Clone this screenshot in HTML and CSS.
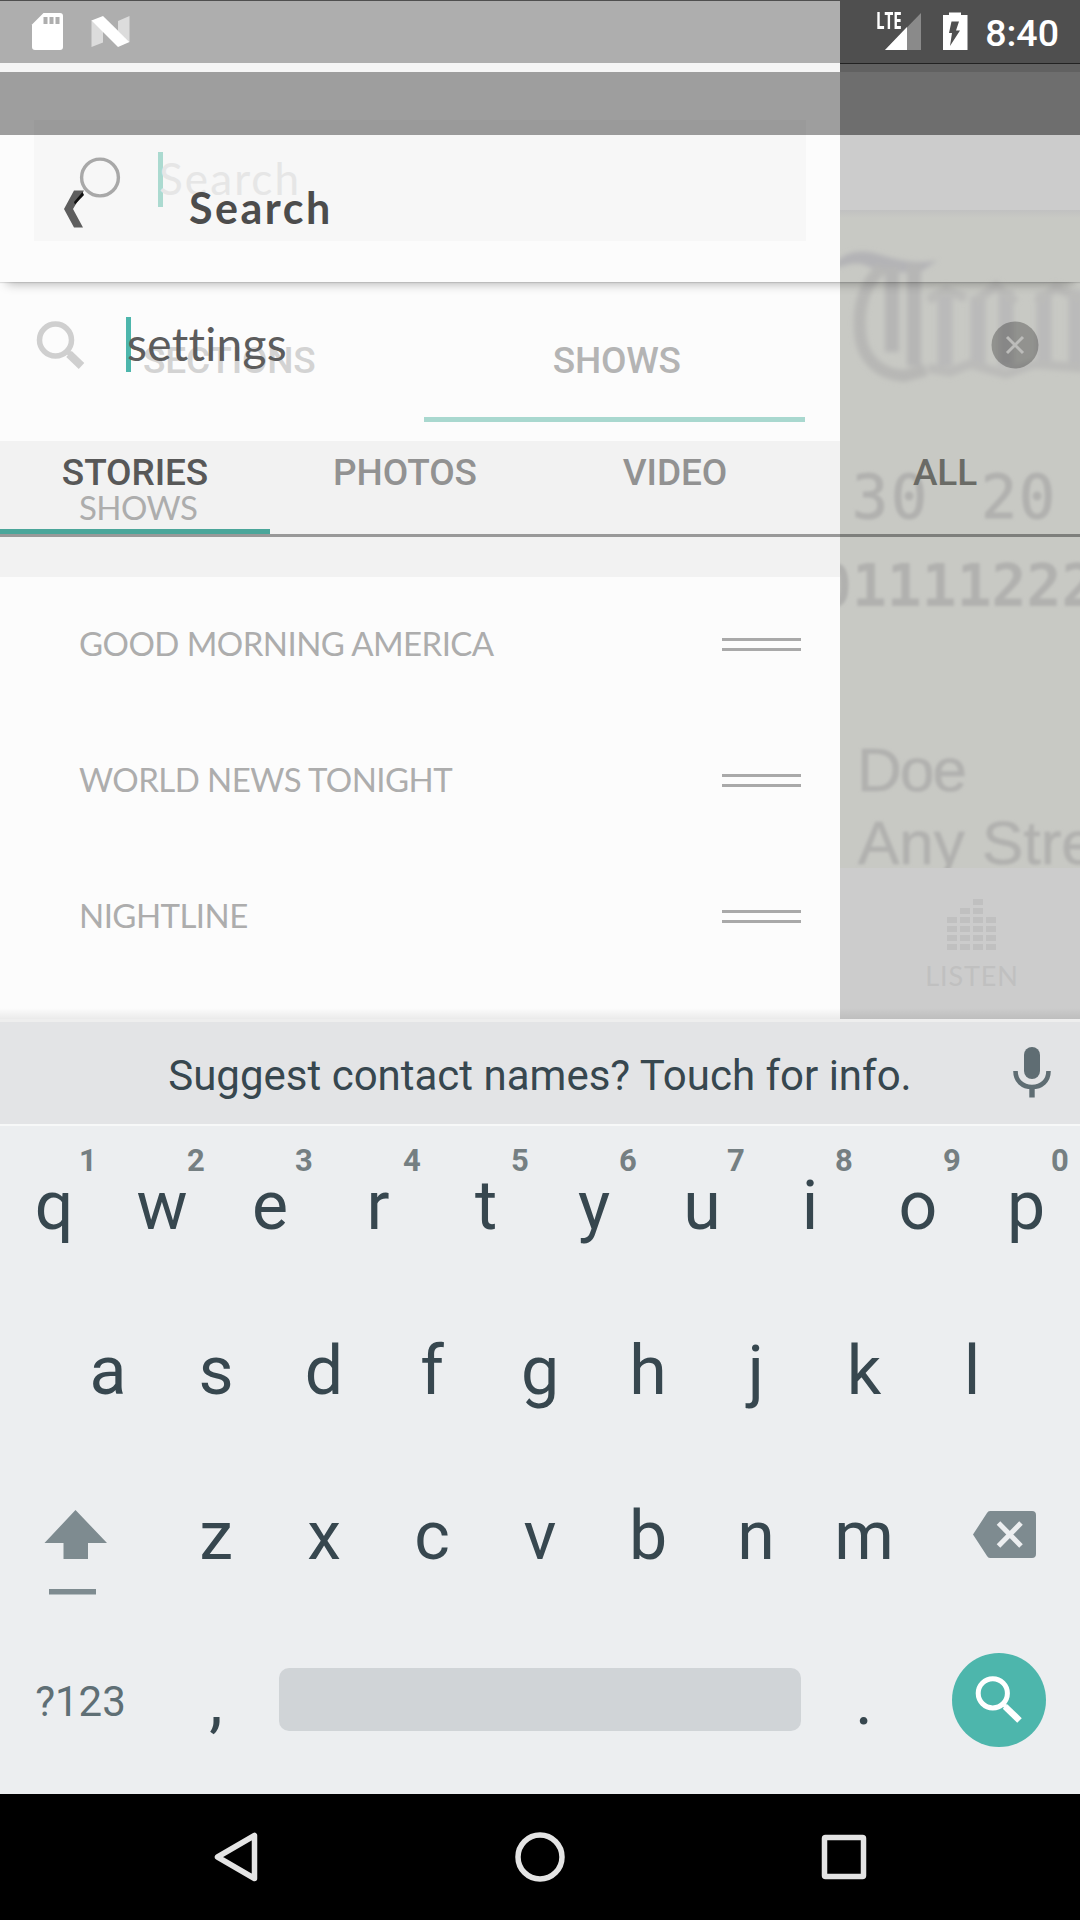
FILE: index.html
```html
<!DOCTYPE html>
<html lang="en">
<head>
<meta charset="utf-8">
<title>Search</title>
<link rel="stylesheet" href="styles.css">
</head>
<body>
<div class="phone">
  <main class="stage">
    <div class="backdrop">
      <section class="drawer">
        <div class="drawer-search">
          <svg class="drawer-lens" width="60" height="70" viewBox="0 0 60 70"><circle cx="36" cy="33.500" r="18.400" fill="none" stroke="#a8a8a8" stroke-width="3.400"/></svg>
          <span class="caret caret-soft"></span>
          <span class="drawer-hint">Search</span>
        </div>
        <div class="drawer-tabs">
          <span class="drawer-tab">SECTIONS</span>
          <span class="drawer-tab drawer-tab-on">SHOWS</span>
        </div>
        <div class="drawer-heading"><span>SHOWS</span></div>
        <div class="show"><span>GOOD MORNING AMERICA</span><i class="grip"></i></div>
        <div class="show"><span>WORLD NEWS TONIGHT</span><i class="grip"></i></div>
        <div class="show"><span>NIGHTLINE</span><i class="grip"></i></div>
      </section>
      <section class="article">
        <svg class="photo" width="240" height="658" viewBox="840 210 240 658">
          <defs>
            <filter id="soft"><feGaussianBlur stdDeviation="1.6"/></filter>
            <filter id="softer"><feGaussianBlur stdDeviation="2.6"/></filter>
            <linearGradient id="edge" x1="0" y1="0" x2="0" y2="1"><stop offset="0" stop-color="#c1c1c1"/><stop offset="1" stop-color="#c8c9c4"/></linearGradient>
          </defs>
          <rect x="840" y="210" width="240" height="658" fill="#c8c9c4"/>
          <rect x="840" y="210" width="240" height="8" fill="url(#edge)"/>
          <g filter="url(#softer)">
            <path d="M836 262C850 248 868 250 884 256C904 262 922 264 938 260L922 271C902 274 880 272 862 264C852 262 844 266 836 268Z" fill="#b3b3b6"/>
            <path d="M882 268C864 284 858 306 860 332C862 358 878 374 904 376L926 370" fill="none" stroke="#b7b7b5" stroke-width="12"/>
            <path d="M892 266V352M914 264V366" fill="none" stroke="#b6b6b5" stroke-width="14"/>
            <path d="M945 296V366M978 296V366M1006 290V366M1044 292V366M1076 290V366" fill="none" stroke="#bababa" stroke-width="15"/>
            <path d="M928 300L946 290L966 298M974 302L996 286L1016 302M1036 302L1056 288L1084 300M928 368L950 372L970 364L1006 374L1034 364L1084 368" fill="none" stroke="#bbbbb9" stroke-width="9"/>
          </g>
          <g filter="url(#soft)" fill="#b1b1af">
            <text class="mono" x="852" y="518" textLength="75">30</text>
            <text class="mono" x="981" y="518" textLength="74">20</text>
            <text class="mono mono-bold" x="817" y="606">01111222</text>
            <text class="plain" x="857" y="791" textLength="110">Doe</text>
            <text class="plain" x="858" y="864">Any Street</text>
          </g>
        </svg>
        <div class="listen">
          <svg width="52" height="52" viewBox="0 0 52 52" fill="#c0c0c0"><path d="M1 18h10v6H1zM1 27h10v6H1zM1 36h10v6H1zM1 45h10v6H1zM14 9h10v6H14zM14 18h10v6H14zM14 27h10v6H14zM14 36h10v6H14zM14 45h10v6H14zM27 0h10v6H27zM27 9h10v6H27zM27 18h10v6H27zM27 27h10v6H27zM27 36h10v6H27zM27 45h10v6H27zM40 18h10v6H40zM40 27h10v6H40zM40 36h10v6H40zM40 45h10v6H40z"/></svg>
          <span class="listen-label">LISTEN</span>
        </div>
      </section>
    </div>

    <div class="search-screen">
      <header class="status">
        <svg width="140" height="63" viewBox="0 0 140 63">
          <path d="M43.500 13H60q3 0 3 3v31q0 3-3 3H35q-3 0-3-3V24.500z" fill="#fff"/>
          <path d="M43.500 17h4v7h-4zM49.500 17h4v7h-4zM55.500 17h4v7h-4z" fill="#aeaeae"/>
          <path d="M91.500 20L103 31v11.500L91.500 47zM129.500 16v26L118 31V21z" fill="#dcdcdc"/>
          <path d="M91.500 20.500L103 16L129.500 42L118 47z" fill="#fff"/>
        </svg>
        <div class="status-right">
          <span class="lte">LTE</span>
          <svg width="110" height="63" viewBox="869 0 110 63">
            <path d="M885 50L921 13V50z" fill="#8a8a8a"/>
            <path d="M885 50L907 27V50z" fill="#fff"/>
            <path d="M949 12.500h12V15h6.500v35h-24.500V15H949z" fill="#fff"/>
            <path d="M951.500 21.500h7.500l-3 9h4L950 46l2-13h-3z" fill="#4f4f4f"/>
          </svg>
          <span class="clock">8:40</span>
        </div>
      </header>
      <div class="toolbar">
        <svg width="30" height="50" viewBox="60 184 30 50"><path d="M74 190.500H84L73 209L83 227.500H74L64 209z" fill="#5e5e5e"/><path d="M82.500 192L74 202L75 204.500L84 195z" fill="#111"/></svg>
        <h1 class="title">Search</h1>
      </div>
      <div class="query">
        <svg width="52" height="52" viewBox="35 319 52 52" fill="none" stroke="#cfcfcf"><circle cx="55.500" cy="340" r="16" stroke-width="5.500"/><path d="M67 351l4 4" stroke-width="5"/><path d="M69 354L81.500 366" stroke-width="8" /></svg>
        <span class="caret"></span>
        <span class="query-text">settings</span>
        <svg class="clear" width="48" height="48" viewBox="0 0 48 48"><circle cx="24" cy="24" r="23.500" fill="rgba(0,0,0,.27)"/><path d="M16 16l16 16M32 16l-16 16" stroke="#bcbcba" stroke-width="3"/></svg>
      </div>
      <nav class="tabs">
        <span class="tab tab-on">STORIES</span>
        <span class="tab">PHOTOS</span>
        <span class="tab">VIDEO</span>
        <span class="tab tab-all">ALL</span>
      </nav>
      <div class="fade"></div>
    </div>
  </main>

  <section class="keyboard">
    <div class="suggest">
      <span class="suggest-text">Suggest contact names? Touch for info.</span>
      <svg class="mic" width="40" height="54" viewBox="1012 1046 40 54"><rect x="1024" y="1047" width="16" height="32" rx="8" fill="#5f6d73"/><path d="M1015.500 1071c0 10 7 16 16.500 16s16.500-6 16.500-16" fill="none" stroke="#5f6d73" stroke-width="4.600"/><path d="M1029.300 1087h5.400v10.500h-5.400z" fill="#5f6d73"/></svg>
    </div>
    <div class="row row-top">
      <span class="key">q<sup>1</sup></span><span class="key">w<sup>2</sup></span><span class="key">e<sup>3</sup></span><span class="key">r<sup>4</sup></span><span class="key">t<sup>5</sup></span><span class="key">y<sup>6</sup></span><span class="key">u<sup>7</sup></span><span class="key">i<sup>8</sup></span><span class="key">o<sup>9</sup></span><span class="key">p<sup>0</sup></span>
    </div>
    <div class="row">
      <span class="key">a</span><span class="key">s</span><span class="key">d</span><span class="key">f</span><span class="key">g</span><span class="key">h</span><span class="key">j</span><span class="key">k</span><span class="key">l</span>
    </div>
    <div class="row">
      <svg width="162" height="165" viewBox="0 1453 162 165" fill="#7e8b90"><path d="M75.500 1510L107 1543H88V1559H63.500V1543H44.500z"/><path d="M49 1589h47v5.500H49z"/></svg>
      <span class="key">z</span><span class="key">x</span><span class="key">c</span><span class="key">v</span><span class="key">b</span><span class="key">n</span><span class="key">m</span>
      <svg width="162" height="165" viewBox="918 1453 162 165"><path d="M990 1511H1032q4 0 4 4V1554q0 4-4 4H990q-2 0-3-2L973 1534.500L987 1513q1-2 3-2z" fill="#7e8b90"/><path d="M998.500 1523L1021 1546M1021 1523L998.500 1546" stroke="#eceef0" stroke-width="5"/></svg>
    </div>
    <div class="row">
      <span class="key key-mode">?123</span><span class="key">,</span><span class="space"></span><span class="key">.</span>
      <svg width="162" height="165" viewBox="918 1618 162 165"><circle cx="999" cy="1700" r="47" fill="#4db6ac"/><g fill="none" stroke="#fff"><circle cx="992.800" cy="1693.300" r="14.600" stroke-width="5"/><path d="M1003 1704.500l3 2" stroke-width="4"/><path d="M1005 1706.500L1019.500 1720.500" stroke-width="6.500"/></g></svg>
    </div>
  </section>

  <nav class="sysbar">
    <svg width="56" height="60" viewBox="0 0 56 60"><path d="M46.500 8.500V51.500L9.500 30z"/></svg>
    <svg width="60" height="60" viewBox="0 0 60 60"><circle cx="31" cy="30" r="22"/></svg>
    <svg width="60" height="60" viewBox="0 0 60 60"><rect x="10.500" y="10.500" width="39" height="39" rx="1"/></svg>
  </nav>
</div>
</body>
</html>
```
FILE: styles.css
```css
* { box-sizing: border-box; }
body { margin: 0; font-family: Roboto, sans-serif; font-variant-ligatures: none; }
svg { display: block; flex: none; }
.phone { width: 1080px; height: 1920px; display: flex; flex-direction: column; overflow: hidden; }

.stage { display: grid; height: 1019px; flex: none; overflow: hidden; }
.backdrop, .search-screen { grid-area: 1 / 1; height: 1019px; min-height: 0; }
.backdrop { display: grid; grid-template-columns: 840px 240px; }

.drawer {
  padding-top: 120px;
  background: linear-gradient(#4f4f4f 1px, #aeaeae 1px 63px, #f5f5f5 63px 72px, #9e9e9e 72px 135px, #fcfcfc 135px);
}
.drawer-search {
  display: flex; align-items: center; height: 121px; margin: 0 34px;
  padding: 0 0 3px 30px; background: rgba(0, 0, 0, .018);
}
.caret { width: 5px; height: 55px; background: #4db6ac; flex: none; }
.caret-soft { margin-left: 34px; background: #abdad0; }
.drawer-hint { margin-left: -4px; padding-bottom: 3px; font: 400 44px/50px Lato, sans-serif; letter-spacing: 2.1px; color: #e6e6e6; }
.drawer-tabs { display: flex; height: 119px; margin: 62px 35px 19px 41px; }
.drawer-tab { flex: 1; display: flex; align-items: center; justify-content: center; padding-right: 6px; border-bottom: 5px solid transparent; font-weight: 500; font-size: 37px; letter-spacing: -.2px; color: #d3d3d3; }
.drawer-tab-on { padding: 0 0 0 5px; border-color: #a9d8cf; color: #b4b4b4; }
.drawer-heading, .show { display: flex; align-items: center; height: 136px; padding: 0 39px 0 79px; font: 400 33px/40px Lato, sans-serif; letter-spacing: -.55px; color: #adadad; }
.drawer-heading { background: #f2f2f2; }
.drawer-heading span, .show span { padding-bottom: 5px; white-space: nowrap; }
.show { justify-content: space-between; }
.grip { width: 79px; height: 13px; margin-bottom: 2px; border: solid #a9a9a9; border-width: 3px 0; }

.article { display: flex; flex-direction: column; padding-top: 210px; background: linear-gradient(#4f4f4f 63px, #222 63px 64px, #616161 64px 72px, #6e6e6e 72px 135px, #ccc 135px); }
.mono { font: 400 60px "DejaVu Sans Mono", monospace; stroke: #b1b1af; stroke-width: 1px; }
.mono-bold { font-weight: 700; font-size: 58px; stroke: none; }
.plain { font: 400 62px "Liberation Sans", sans-serif; stroke: #b1b1af; stroke-width: .6px; }
.listen { display: flex; flex-direction: column; align-items: center; padding: 31px 0 0 24px; }
.listen-label { margin-top: 8px; font: 400 27px/34px Lato, sans-serif; letter-spacing: .9px; color: #c0c0c0; }

.search-screen { display: flex; flex-direction: column; }
.status { display: flex; justify-content: space-between; height: 63px; margin-bottom: 72px; }
.status-right { display: flex; position: relative; padding-right: 21px; }
.lte { position: absolute; left: 7px; top: 8px; font: 700 23px/24px "Open Sans", sans-serif; color: #fff; transform: scaleX(.66); transform-origin: left; }
.clock { margin-left: 6px; padding-top: 2px; font-weight: 500; font-size: 37.500px; line-height: 63px; color: #fff; }
.toolbar { display: flex; align-items: center; height: 147px; padding-left: 60px; box-shadow: 0 9px 10px -7px rgba(0, 0, 0, .28), 0 1px 1px rgba(0, 0, 0, .1); clip-path: inset(0 0 -20px 0); }
.title { margin: 0 0 0 99px; padding-bottom: 2px; font: 700 43px/50px Lato, sans-serif; letter-spacing: 2.5px; color: #4c4c4c; }
.query { display: flex; align-items: center; height: 125px; margin-bottom: 9px; padding: 0 41px 0 35px; }
.query .caret { margin-left: 39px; }
.query-text { margin-left: -4px; padding-bottom: 1px; font: 400 46px/56px Lato, sans-serif; letter-spacing: .3px; color: #5c5c5c; }
.clear { margin-left: auto; }
.tabs { display: flex; height: 121px; border-bottom: 3px solid rgba(0, 0, 0, .37); }
.tab { flex: 1; display: flex; align-items: center; justify-content: center; border-bottom: 5px solid transparent; font-weight: 500; font-size: 37px; letter-spacing: -.1px; color: #929292; }
.tab-on { border-color: #4ba69a; color: #585858; }
.tab-all { color: #6a6b66; }
.fade { margin-top: auto; height: 11px; background: linear-gradient(rgba(0, 0, 0, 0), rgba(0, 0, 0, .07)); }

.keyboard { height: 775px; flex: none; background: #eceef0; color: #37474f; }
.suggest { position: relative; display: flex; align-items: center; justify-content: center; height: 107px; border-top: 3px solid #eee; border-bottom: 2px solid #f7f8f8; background: #e3e4e6; }
.suggest-text { font-size: 42px; padding-top: 5px; }
.mic { position: absolute; right: 28px; top: 24px; }
.row { display: flex; justify-content: center; height: 165px; }
.row-top { height: 159px; margin-bottom: 3px; }
.key { position: relative; width: 108px; padding-top: 1px; display: flex; align-items: center; justify-content: center; font-size: 68px; }
.key sup { position: absolute; right: 0; top: 17px; width: 40px; text-align: center; font-weight: 700; font-size: 31px; line-height: 36px; color: #757f82; }
.key-mode { width: 162px; padding-right: 1px; font-size: 42px; color: #5f6f75; }
.space { width: 522px; height: 63px; margin: 50px 9px 0; border-radius: 10px; background: #d0d4d7; }

.sysbar { flex: 1; display: flex; align-items: center; justify-content: space-between; padding: 0 206px 0 208px; background: #000; }
.sysbar svg { fill: none; stroke: #e4e4e4; stroke-width: 5.500; stroke-linejoin: round; }
```
